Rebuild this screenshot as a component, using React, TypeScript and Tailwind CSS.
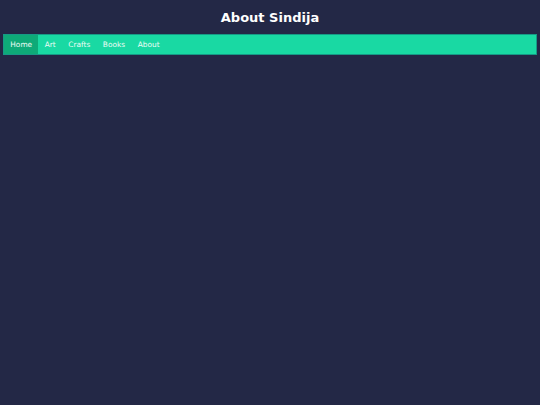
const links = ['Home', 'Art', 'Crafts', 'Books', 'About'];

export default function App() {
  return (
    <div className="min-h-[405px] bg-[#232846] pt-[9px] px-[3px]" style={{ fontFamily: '"DejaVu Sans", sans-serif' }}>
      <h1 className="text-center text-[13px] font-bold text-[#fffffe] leading-[18px]">About Sindija</h1>
      <nav className="mt-[7px] flex h-[21px] items-stretch border border-[#169a86] bg-[#19d9a3]">
        {links.map((l, i) => (
          <a
            key={l}
            className={`flex items-center px-[6.3px] pt-[1px] text-[7.4px] text-[#eefcf6] ${i === 0 ? 'bg-[#0eaa78]' : ''}`}
          >
            {l}
          </a>
        ))}
      </nav>
    </div>
  );
}
